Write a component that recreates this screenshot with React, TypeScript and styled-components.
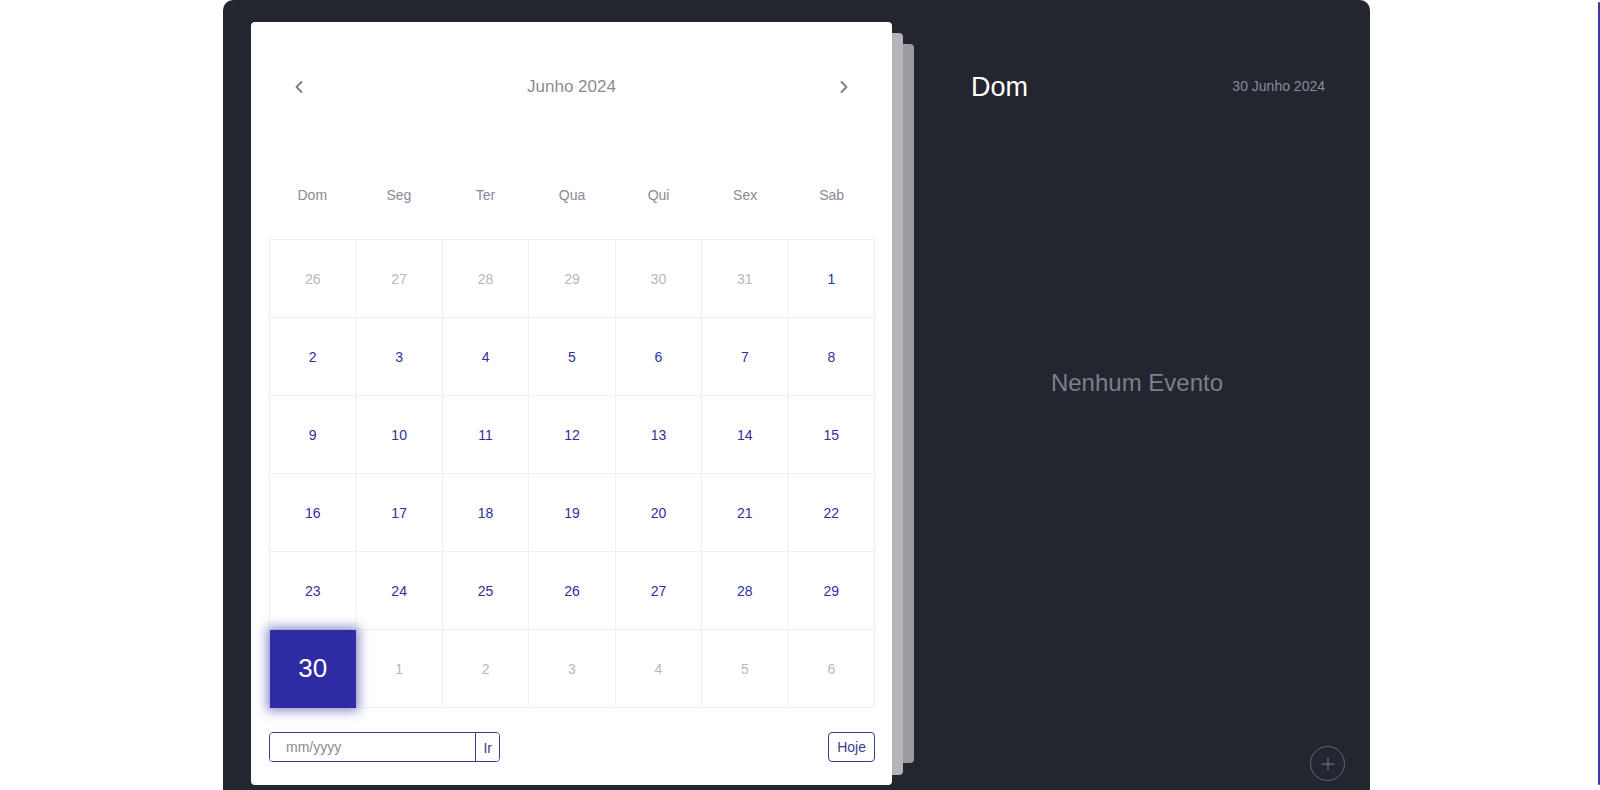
import React from "react";
import styled, { createGlobalStyle } from "styled-components";
import { ChevronLeft, ChevronRight, Plus } from "lucide-react";

const Global = createGlobalStyle`
  html, body { margin: 0; padding: 0; background: #ffffff; overflow: hidden; }
  body { font-family: "Liberation Sans", Arial, sans-serif; }
  * { box-sizing: border-box; }
`;

const Page = styled.div`
  width: 1600px;
  height: 790px;
  padding-left: 223px;
`;

const EdgeLine = styled.div`
  position: fixed;
  top: 2px;
  bottom: 5px;
  right: 0;
  width: 2px;
  background: #3a3aa0;
  border-radius: 2px;
`;

const Shell = styled.div`
  width: 1147px;
  height: 800px;
  background: #23252f;
  border-radius: 10px 10px 0 0;
  display: flex;
  padding: 22px 0 0 28px;
`;

const CardStack = styled.div`
  position: relative;
  width: 641px;
  height: 763px;
  flex-shrink: 0;
`;

const BackPage = styled.div<{ $off: number; $h: number; $color: string }>`
  position: absolute;
  left: ${(p) => p.$off}px;
  top: ${(p) => p.$off}px;
  width: 641px;
  height: ${(p) => p.$h}px;
  background: ${(p) => p.$color};
  border-radius: 4px;
`;

const Card = styled.div`
  position: relative;
  width: 641px;
  height: 763px;
  background: #ffffff;
  border-radius: 4px;
  padding: 18px 17px 23px 18px;
  display: flex;
  flex-direction: column;
`;

const MonthHeader = styled.div`
  height: 94px;
  display: flex;
  align-items: center;
  justify-content: space-between;
  padding: 0 21px 0 20px;
`;

const NavButton = styled.button`
  border: none;
  background: transparent;
  padding: 0;
  display: flex;
  align-items: center;
  justify-content: center;
  color: #7d7d88;
  cursor: pointer;
`;

const MonthTitle = styled.div`
  font-size: 17px;
  color: #8b8b96;
`;

const WeekRow = styled.div`
  display: grid;
  grid-template-columns: repeat(7, 1fr);
  height: 40px;
  margin: 42px 0 24px;
  align-items: center;
`;

const WeekDay = styled.div`
  text-align: center;
  font-size: 14px;
  color: #8a8a95;
`;

const DaysGrid = styled.div`
  display: grid;
  grid-template-columns: repeat(7, 1fr);
  grid-auto-rows: 78px;
  border-top: 1px solid #f0f0f3;
  border-left: 1px solid #f0f0f3;
`;

const DayCell = styled.div<{ $muted?: boolean; $selected?: boolean }>`
  position: relative;
  display: flex;
  align-items: center;
  justify-content: center;
  border-right: 1px solid #f0f0f3;
  border-bottom: 1px solid #f0f0f3;
  font-size: ${(p) => (p.$selected ? "26px" : "14px")};
  color: ${(p) => (p.$selected ? "#ffffff" : p.$muted ? "#b7b7bd" : "#322f98")};
  background: ${(p) => (p.$selected ? "#2e2ba3" : "transparent")};
  box-shadow: ${(p) => (p.$selected ? "0 0 10px 3px rgba(46,43,163,0.55)" : "none")};
  z-index: ${(p) => (p.$selected ? 1 : 0)};
  ${(p) => (p.$selected ? "border-color: #2e2ba3;" : "")}
`;

const Footer = styled.div`
  margin-top: 24px;
  height: 30px;
  display: flex;
  justify-content: space-between;
`;

const GoForm = styled.div`
  display: flex;
  width: 231px;
  height: 30px;
  border: 1px solid #3d3b8e;
  border-radius: 4px;
  overflow: hidden;
`;

const MonthInput = styled.input`
  flex: 1;
  min-width: 0;
  border: none;
  outline: none;
  padding: 0 0 0 16px;
  font-family: "Liberation Sans", Arial, sans-serif;
  font-size: 14px;
  color: #333;
  &::placeholder { color: #8a8a95; }
`;

const SmallButton = styled.button<{ $bordered?: boolean }>`
  height: 30px;
  padding: 0 ${(p) => (p.$bordered ? "8px" : "7px")};
  background: #ffffff;
  border: none;
  border-left: 1px solid #3d3b8e;
  ${(p) => (p.$bordered ? "border: 1px solid #3d3b8e; border-radius: 4px;" : "")}
  font-family: "Liberation Sans", Arial, sans-serif;
  font-size: 14px;
  color: #3d3b8e;
  cursor: pointer;
`;

const Side = styled.div`
  flex: 1;
  display: flex;
  flex-direction: column;
  margin-top: -22px;
  padding-left: 30px;
`;

const SideHeader = styled.div`
  margin-top: 70px;
  height: 34px;
  display: flex;
  align-items: center;
  justify-content: space-between;
  padding: 0 45px 0 49px;
`;

const DayName = styled.div`
  font-size: 27px;
  color: #ffffff;
`;

const FullDate = styled.div`
  font-size: 14px;
  color: #8a8b99;
  margin-top: -2px;
`;

const Empty = styled.div`
  flex: 1;
  display: flex;
  align-items: center;
  justify-content: center;
  padding: 0 18px 84px 0;
  font-size: 24px;
  color: #7c7f8c;
`;

const SideFooter = styled.div`
  height: 54px;
  display: flex;
  justify-content: flex-end;
  padding: 0 25px 0 0;
`;

const AddButton = styled.button`
  width: 35px;
  height: 35px;
  border-radius: 50%;
  border: 1.5px solid #646775;
  background: transparent;
  color: #6b6e7c;
  display: flex;
  align-items: center;
  justify-content: center;
  padding: 0;
  cursor: pointer;
`;

const weekDays = ["Dom", "Seg", "Ter", "Qua", "Qui", "Sex", "Sab"];

type Day = { n: number; muted?: boolean; selected?: boolean };

const days: Day[] = [
  ...[26, 27, 28, 29, 30, 31].map((n) => ({ n, muted: true })),
  ...Array.from({ length: 30 }, (_, i) => ({ n: i + 1, selected: i + 1 === 30 })),
  ...[1, 2, 3, 4, 5, 6].map((n) => ({ n, muted: true })),
];

export default function App() {
  return (
    <Page>
      <Global />
      <EdgeLine />
      <Shell>
        <CardStack>
          <BackPage $off={22} $h={719} $color="#9b9ba0" />
          <BackPage $off={11} $h={742} $color="#b4b4b9" />
          <Card>
            <MonthHeader>
              <NavButton aria-label="Mês anterior">
                <ChevronLeft size={20} strokeWidth={2.25} />
              </NavButton>
              <MonthTitle>Junho 2024</MonthTitle>
              <NavButton aria-label="Próximo mês">
                <ChevronRight size={20} strokeWidth={2.25} />
              </NavButton>
            </MonthHeader>
            <WeekRow>
              {weekDays.map((d) => (
                <WeekDay key={d}>{d}</WeekDay>
              ))}
            </WeekRow>
            <DaysGrid>
              {days.map((d, i) => (
                <DayCell key={i} $muted={d.muted} $selected={d.selected}>
                  {d.n}
                </DayCell>
              ))}
            </DaysGrid>
            <Footer>
              <GoForm>
                <MonthInput placeholder="mm/yyyy" />
                <SmallButton>Ir</SmallButton>
              </GoForm>
              <SmallButton $bordered>Hoje</SmallButton>
            </Footer>
          </Card>
        </CardStack>
        <Side>
          <SideHeader>
            <DayName>Dom</DayName>
            <FullDate>30 Junho 2024</FullDate>
          </SideHeader>
          <Empty>Nenhum Evento</Empty>
          <SideFooter>
            <AddButton aria-label="Adicionar evento">
              <Plus size={20} strokeWidth={1.5} />
            </AddButton>
          </SideFooter>
        </Side>
      </Shell>
    </Page>
  );
}
